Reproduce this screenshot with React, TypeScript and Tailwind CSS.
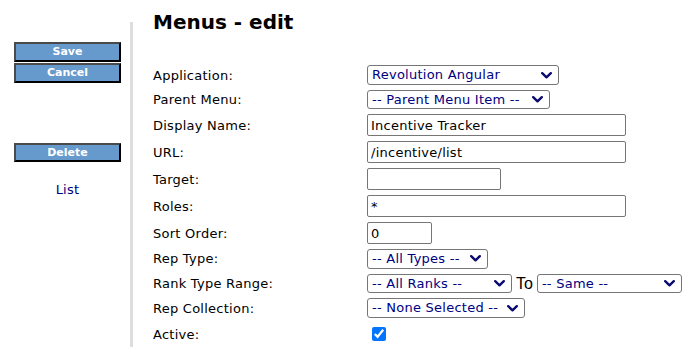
import React from "react";

const Chevron = () => (
  <svg width="11" height="7" viewBox="0 0 11 7" className="shrink-0">
    <polyline points="1.2,1.2 5.5,5.3 9.8,1.2" fill="none" stroke="#0a0a70" strokeWidth="2.4" strokeLinecap="round" strokeLinejoin="round" />
  </svg>
);

const Select = ({ text, w, h = "h-[19.5px]" }: { text: string; w: string; h?: string }) => (
  <div className={`${w} ${h} flex items-center justify-between border border-[#767676] rounded-[3px] pl-[4px] pr-[6px] text-[#000080] bg-white whitespace-nowrap overflow-hidden`}>
    <span>{text}</span>
    <Chevron />
  </div>
);

const Input = ({ value, w }: { value: string; w: string }) => (
  <input
    readOnly
    value={value}
    className={`${w} h-[22px] border border-[#767676] rounded-[2px] pl-[3px] text-black bg-white outline-none tracking-[0.25px]`}
  />
);

const Row = ({ label, h, children }: { label: string; h: string; children: React.ReactNode }) => (
  <div className={`flex items-center ${h}`}>
    <div className="w-[214px] shrink-0 pt-[1px]">{label}</div>
    <div className="flex items-center">{children}</div>
  </div>
);

const Btn = ({ label, cls = "" }: { label: string; cls?: string }) => (
  <div
    className={`w-[107px] h-[19.5px] flex items-center justify-center bg-[#6699cc] border-2 border-t-[#4a4a4a] border-l-[#4a4a4a] border-b-black border-r-black text-white font-bold text-[11px] leading-none ${cls}`}
  >
    {label}
  </div>
);

export default function App() {
  return (
    <div
      className="flex min-h-screen bg-white text-black text-[13px] leading-[16px]"
      style={{ fontFamily: '"DejaVu Sans", Verdana, sans-serif' }}
    >
      <div className="w-[130px] shrink-0 pt-[42px] pl-[14px]">
        <Btn label="Save" />
        <Btn label="Cancel" cls="mt-[1.5px]" />
        <Btn label="Delete" cls="mt-[60px]" />
        <div className="w-[107px] text-center mt-[19.5px] text-[#000080] tracking-[0.25px]">List</div>
      </div>
      <div className="w-[3px] bg-[#dddddd] mt-[22px] self-stretch shrink-0" />
      <div className="pl-[20px] pt-[10px]">
        <h1 className="text-[20px] leading-[24px] font-bold">Menus - edit</h1>
        <div className="mt-[28.5px] flex flex-col tracking-[0.25px]">
          <Row label="Application:" h="h-[25px]">
            <Select text="Revolution Angular" w="w-[192px]" h="h-[20px]" />
          </Row>
          <Row label="Parent Menu:" h="h-[24px]">
            <Select text="-- Parent Menu Item --" w="w-[183px]" />
          </Row>
          <Row label="Display Name:" h="h-[27px]">
            <Input value="Incentive Tracker" w="w-[259px]" />
          </Row>
          <Row label="URL:" h="h-[27px]">
            <Input value="/incentive/list" w="w-[259px]" />
          </Row>
          <Row label="Target:" h="h-[27px]">
            <Input value="" w="w-[134px]" />
          </Row>
          <Row label="Roles:" h="h-[27px]">
            <Input value="*" w="w-[259px]" />
          </Row>
          <Row label="Sort Order:" h="h-[27px]">
            <Input value="0" w="w-[65px]" />
          </Row>
          <Row label="Rep Type:" h="h-[24.5px]">
            <Select text="-- All Types --" w="w-[121px]" />
          </Row>
          <Row label="Rank Type Range:" h="h-[25px]">
            <Select text="-- All Ranks --" w="w-[145px]" />
            <span
              className="mx-[4px] text-[16px] leading-[19px] tracking-normal"
              style={{ fontFamily: '"Liberation Sans", Arial, sans-serif' }}
            >
              To
            </span>
            <Select text="-- Same --" w="w-[145px]" />
          </Row>
          <Row label="Rep Collection:" h="h-[24px]">
            <Select text="-- None Selected --" w="w-[158px]" />
          </Row>
          <Row label="Active:" h="h-[28px]">
            <input type="checkbox" defaultChecked className="ml-[5px] w-[14px] h-[14px] accent-[#0075ff]" />
          </Row>
        </div>
      </div>
    </div>
  );
}
